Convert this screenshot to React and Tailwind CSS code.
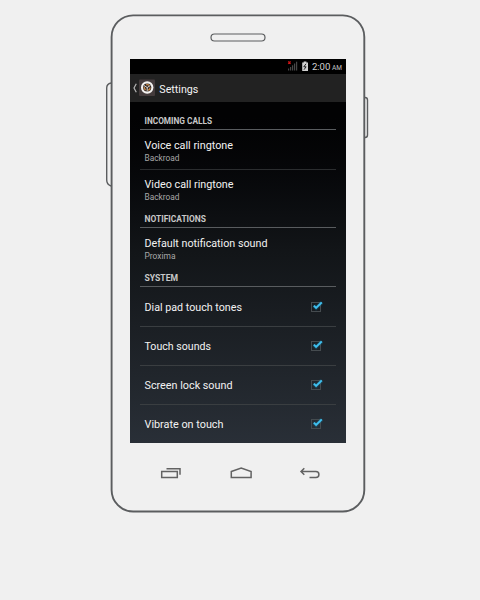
function Header({ title, width }) {
  return (
    <div className="mx-2.5 flex h-[19px] shrink-0 items-end border-b border-[#595c5f] pb-[2px] pl-[4px]">
      <svg className="block h-[12px] w-full overflow-visible">
        <text x="0.5" y="9" textLength={width} lengthAdjust="spacingAndGlyphs" fill="#c8c8c8" className="text-[8.4px] font-bold">{title}</text>
      </svg>
    </div>
  );
}

function Label({ width, children }) {
  return (
    <svg className="block h-[16px] w-[150px] overflow-visible">
      <text x="0.5" y="12.3" textLength={width} lengthAdjust="spacingAndGlyphs" fill="#f2f2f2" className="text-[11.4px]">{children}</text>
    </svg>
  );
}

function SoundRow({ title, width, value, valueWidth, className = "" }) {
  return (
    <div className={"mx-2.5 shrink-0 pl-[4px] " + className}>
      <Label width={width}>{title}</Label>
      <svg className="block h-[12px] w-[150px] overflow-visible">
        <text x="0.5" y="8" textLength={valueWidth} lengthAdjust="spacingAndGlyphs" fill="#a8a8a8" className="text-[8.5px]">{value}</text>
      </svg>
    </div>
  );
}

function CheckRow({ title, width, last }) {
  return (
    <div className={"mx-2.5 flex h-[39px] shrink-0 items-center justify-between pl-[4px] pr-[11px] " + (last ? "pb-px" : "border-b border-[#3a3e41]")}>
      <Label width={width}>{title}</Label>
      <svg width="14" height="14" viewBox="0 0 14 14" className="overflow-visible">
        <rect x="0.5" y="2.5" width="9" height="9" fill="none" stroke="#454b4f" />
        <path d="M2.8 5.6L5.1 7.9L10.8 2.4" fill="none" stroke="#148fbd" strokeOpacity=".25" strokeWidth="4" />
        <path d="M2.8 5.6L5.1 7.9L10.8 2.4" fill="none" stroke="#3fc0f0" strokeWidth="2" />
      </svg>
    </div>
  );
}

function StatusBar() {
  return (
    <div className="flex h-[15px] shrink-0 items-center justify-end bg-black pr-[3px]">
      <svg width="60" height="15" viewBox="0 0 60 15">
        <g fill="#484848">
          <rect x="5" y="9.5" width="1.2" height="2" />
          <rect x="7" y="8" width="1.2" height="3.5" />
          <rect x="9" y="6.3" width="1.2" height="5.2" />
          <rect x="11" y="4.5" width="1.2" height="7" />
          <rect x="13" y="2.7" width="1.2" height="8.8" />
        </g>
        <path d="M5.2 2.5l2.4 2.2m0-2.2l-2.4 2.2" stroke="#d01414" strokeWidth="1.2" />
        <path d="M19.2 3.5h1.5V2.5h2.7v1H25v8.5h-5.8z" fill="#d0d0d0" />
        <path d="M23 4.8l-2.2 3h2.3L21 10.7" fill="none" stroke="#111" strokeWidth=".9" />
        <text x="28.9" y="11.2" textLength="18.5" lengthAdjust="spacingAndGlyphs" fill="#d2d2d2" className="text-[9.8px]">2:00</text>
        <text x="49" y="11.2" textLength="10" lengthAdjust="spacingAndGlyphs" fill="#c4c4c4" className="text-[6.6px]">AM</text>
      </svg>
    </div>
  );
}

function ActionBar() {
  return (
    <div className="flex h-7 shrink-0 items-center bg-[#222222] pl-[2px]">
      <svg width="6" height="12" viewBox="0 0 6 12">
        <path d="M4.3 1.8L2 6L4.3 10.2" fill="none" stroke="#b4b4b4" strokeWidth="1.2" />
      </svg>
      <svg width="18" height="18" viewBox="0 0 18 18">
        <rect x="1" y="0.5" width="16" height="16.5" rx="1" fill="#443b3c" />
        <circle cx="9.2" cy="8.5" r="6.2" fill="#f4f2f0" />
        <circle cx="9.2" cy="8.5" r="4.1" fill="#2d2523" />
        <circle cx="9.2" cy="8.5" r="2.9" fill="none" stroke="#c38445" strokeWidth="1.4" strokeDasharray="3.4 2.673" />
        <path d="M9.2 8.5V12.3M9.2 8.5L6 6.5M9.2 8.5l3.2-2" stroke="#f1e9e2" strokeWidth=".9" />
      </svg>
      <svg width="60" height="18" className="ml-[3px]">
        <text x="0.3" y="13.9" textLength="39" lengthAdjust="spacingAndGlyphs" fill="#f4f4f4" className="text-[11.7px]">Settings</text>
      </svg>
    </div>
  );
}

function NavKeys() {
  return (
    <div className="flex h-[58px] items-center pl-[48px]">
      <svg width="24" height="16" viewBox="0 0 24 16" fill="none" stroke="#626262" strokeWidth="1.5">
        <path d="M3.7 7.6h15.6v5.9H3.7zM8.5 4.7h13.5v6" />
      </svg>
      <svg width="24" height="16" viewBox="0 0 24 16" fill="none" stroke="#626262" strokeWidth="1.5" className="ml-[46px]">
        <path d="M3.3 7.5L13.2 4l9.9 3.5v6H3.3z" />
      </svg>
      <svg width="24" height="16" viewBox="0 0 24 16" fill="none" stroke="#626262" strokeWidth="1.5" className="ml-[46px] overflow-visible">
        <path d="M6.3 4.3L3 7.6l3.3 3.2M3.2 7.6h14.7q3 0 3 3t-3 3H11.5" />
      </svg>
    </div>
  );
}

export default function App() {
  return (
    <div className="flex h-[600px] w-[480px] items-start bg-[#f0f0f0] pl-[110px] pt-[14px] font-[Roboto,sans-serif]">
      <div className="relative h-[498px] w-[255px]">
        <svg width="265" height="499" viewBox="-5 0 265 499" fill="none" stroke="#5b5d5f" className="pointer-events-none absolute -left-[5px] top-0">
          <path d="M1 69Q-3.3 70-3.3 74V166Q-3.3 170.5 1 172" strokeWidth="1.4" />
          <path d="M255 83.5Q257.5 83.5 257.5 86V121Q257.5 123.5 255 123.5" strokeWidth="1.4" />
          <rect x="1.6" y="1.4" width="252.7" height="496.1" rx="21.5" strokeWidth="1.9" />
          <rect x="101" y="20" width="54" height="7" rx="3.5" strokeWidth="1.2" />
        </svg>
        <div className="pl-5 pt-[45px]">
          <div className="flex h-96 w-[216px] flex-col overflow-hidden bg-linear-to-b from-[#020203] from-15% via-[#121518] via-50% to-[#292f37]">
            <StatusBar />
            <ActionBar />
            <div className="h-[9px] shrink-0" />
            <Header title="INCOMING CALLS" width="67.5" />
            <SoundRow title="Voice call ringtone" width="88.5" value="Backroad" valueWidth="35" className="h-[40px] border-b border-[#2b2d2f] pt-[7px]" />
            <SoundRow title="Video call ringtone" width="89" value="Backroad" valueWidth="35" className="h-[39px] pt-[6px]" />
            <Header title="NOTIFICATIONS" width="61.5" />
            <SoundRow title="Default notification sound" width="123" value="Proxima" valueWidth="31" className="h-[40px] pt-[7px]" />
            <Header title="SYSTEM" width="33.5" />
            <div className="shrink-0 pt-px">
              <CheckRow title="Dial pad touch tones" width="97.5" />
              <CheckRow title="Touch sounds" width="66.5" />
              <CheckRow title="Screen lock sound" width="88" />
              <CheckRow title="Vibrate on touch" width="79" last />
            </div>
          </div>
        </div>
        <NavKeys />
      </div>
    </div>
  );
}
